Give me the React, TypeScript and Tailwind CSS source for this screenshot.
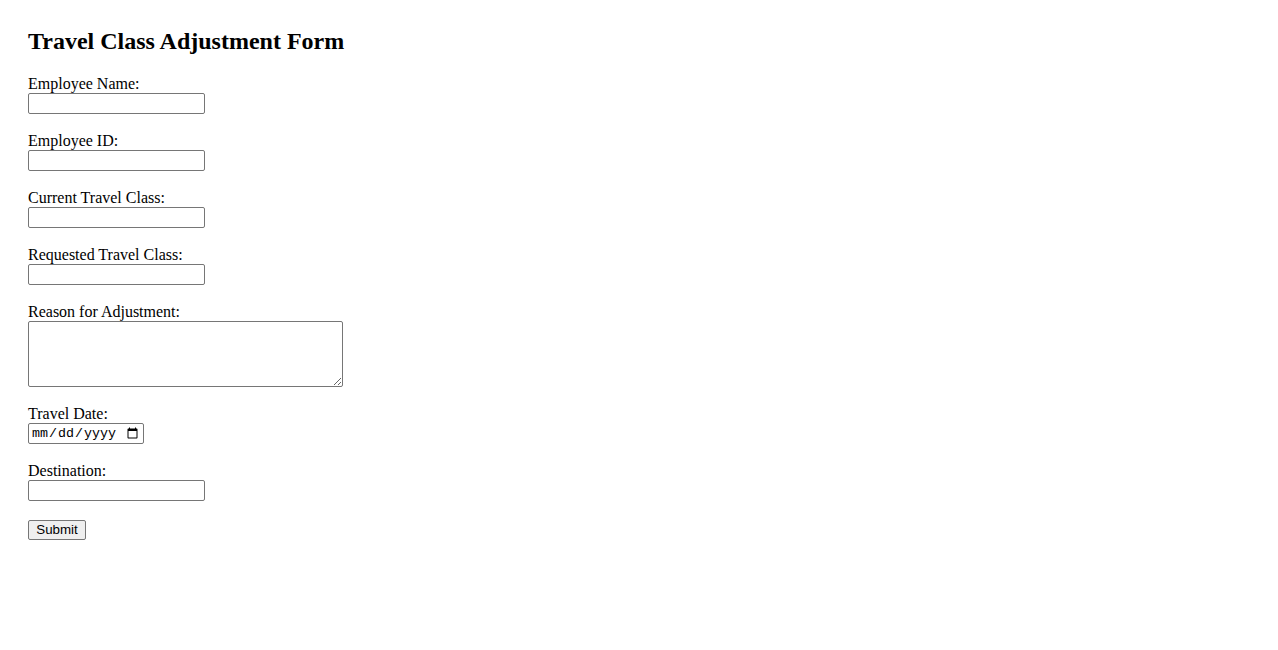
import React, { useState } from 'react';

const fields = [
  { id: 'name', label: 'Employee Name:' },
  { id: 'empId', label: 'Employee ID:' },
  { id: 'current', label: 'Current Travel Class:' },
  { id: 'requested', label: 'Requested Travel Class:' },
];

const inputCls =
  'block w-[177px] h-[21px] border border-[#767676] rounded-[2px] bg-white px-[2px] py-[1px] text-[13.33px] font-["Liberation_Sans",Arial,sans-serif]';

export default function App() {
  const [values, setValues] = useState<Record<string, string>>({});
  const set = (k: string) => (e: React.ChangeEvent<HTMLInputElement | HTMLTextAreaElement>) =>
    setValues({ ...values, [k]: e.target.value });

  return (
    <div className="min-h-[650px] bg-white px-[28px] pt-[27px] font-['Liberation_Serif','Times_New_Roman',serif] text-black">
      <h2 className="mb-[20px] text-[24px] font-bold leading-[28px]">Travel Class Adjustment Form</h2>
      <form onSubmit={(e) => e.preventDefault()} className="flex flex-col">
        {fields.map((f) => (
          <div key={f.id} className="mb-[18px]">
            <label htmlFor={f.id} className="block text-[16px] leading-[18px]">{f.label}</label>
            <input id={f.id} type="text" value={values[f.id] || ''} onChange={set(f.id)} className={inputCls} />
          </div>
        ))}

        <div className="mb-[18px]">
          <label htmlFor="reason" className="block text-[16px] leading-[18px]">Reason for Adjustment:</label>
          <textarea
            id="reason"
            value={values.reason || ''}
            onChange={set('reason')}
            className="block w-[315px] h-[66px] border border-[#767676] rounded-[2px] bg-white p-[2px] text-[13.33px] font-['Liberation_Mono',monospace]"
          />
        </div>

        <div className="mb-[18px]">
          <label htmlFor="date" className="block text-[16px] leading-[18px]">Travel Date:</label>
          <input
            id="date"
            type="date"
            value={values.date || ''}
            onChange={set('date')}
            className="block w-[116px] h-[21px] border border-[#767676] rounded-[2px] bg-white px-[2px] py-[1px] text-[13.33px] font-['Liberation_Mono',monospace]"
          />
        </div>

        <div className="mb-[19px]">
          <label htmlFor="dest" className="block text-[16px] leading-[18px]">Destination:</label>
          <input id="dest" type="text" value={values.dest || ''} onChange={set('dest')} className={inputCls} />
        </div>

        <button
          type="submit"
          className="block w-[58px] h-[20px] border border-[#767676] rounded-[2px] bg-[#efefef] px-[6px] text-[13.33px] leading-[16px] font-['Liberation_Sans',Arial,sans-serif] text-black"
        >
          Submit
        </button>
      </form>
    </div>
  );
}
